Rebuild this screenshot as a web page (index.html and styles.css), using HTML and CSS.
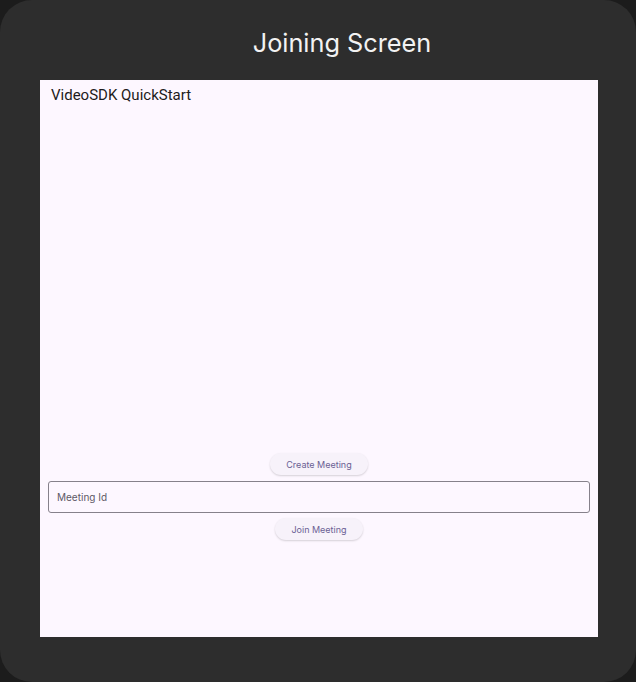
FILE: index.html
```html
<!DOCTYPE html>
<html>
<head>
<meta charset="utf-8">
<link rel="stylesheet" href="styles.css">
</head>
<body>
<div class="frame">
  <div class="titlebar"><span class="title">Joining Screen</span></div>
  <div class="screen">
    <div class="appbar">VideoSDK QuickStart</div>
    <div class="content">
      <button class="btn btn-create">Create Meeting</button>
      <div class="field"><span class="placeholder">Meeting Id</span></div>
      <button class="btn btn-join">Join Meeting</button>
    </div>
  </div>
</div>
</body>
</html>
```

FILE: styles.css
```css
html, body {
  margin: 0;
  padding: 0;
  background: #1c1c1c;
  width: 636px;
  height: 682px;
  overflow: hidden;
}
.frame {
  box-sizing: border-box;
  width: 636px;
  height: 682px;
  background: #2d2d2d;
  border-radius: 32px;
  display: flex;
  flex-direction: column;
  padding: 0 38px 45px 40px;
}
.titlebar {
  height: 80px;
  display: flex;
  justify-content: center;
  align-items: flex-start;
  padding-left: 46px;
  box-sizing: border-box;
}
.title {
  font-family: "Inter", "Roboto", sans-serif;
  font-size: 25.3px;
  font-weight: 400;
  color: #f2f2f2;
  margin-top: 27px;
  line-height: 32px;
}
.screen {
  flex: 1;
  background: #fdf7ff;
  display: flex;
  flex-direction: column;
}
.appbar {
  font-family: "Roboto", sans-serif;
  font-size: 15px;
  color: #1d1b20;
  padding: 6px 0 0 11px;
  line-height: 18px;
}
.content {
  display: flex;
  flex-direction: column;
  align-items: center;
  margin-top: 349px;
  padding: 0 8px;
}
.btn {
  font-family: "Inter", "Roboto", sans-serif;
  font-size: 9px;
  color: #6b5f94;
  background: #f7f2fa;
  border: none;
  border-radius: 11px;
  height: 22px;
  box-shadow: 0 1px 2px rgba(0,0,0,0.16);
  padding: 0;
}
.btn-create { width: 98px; }
.btn-join { width: 88px; margin-top: 5px; }
.field {
  box-sizing: border-box;
  width: 100%;
  height: 32px;
  margin-top: 6px;
  border: 1px solid #86818b;
  border-radius: 3px;
  display: flex;
  align-items: center;
  padding-left: 8px;
}
.placeholder {
  font-family: "Inter", "Roboto", sans-serif;
  font-size: 10px;
  color: #5e5966;
}
```
